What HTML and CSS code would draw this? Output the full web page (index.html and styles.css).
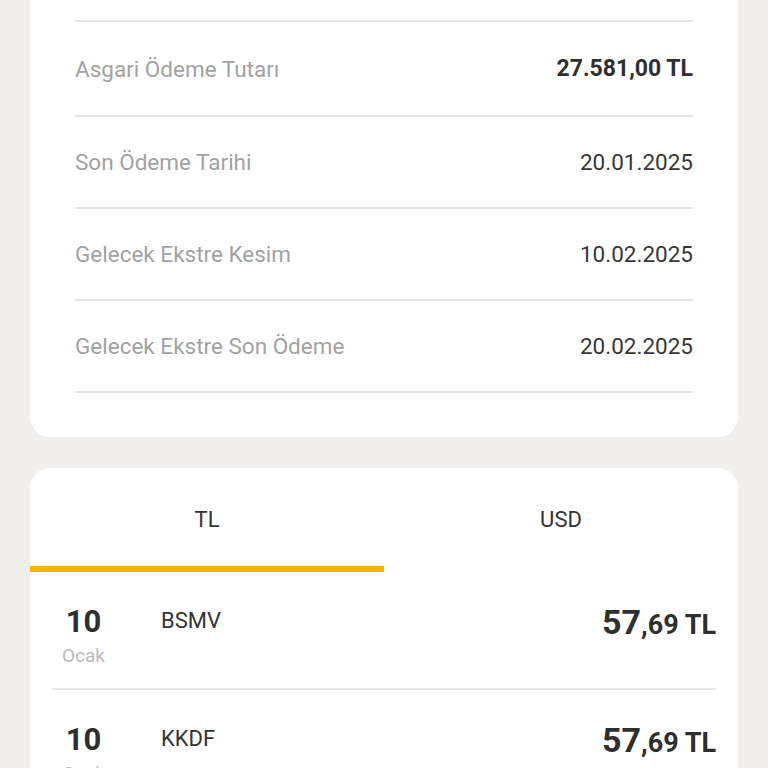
FILE: index.html
```html
<!DOCTYPE html>
<html lang="tr">
<head>
  <meta charset="UTF-8" />
  <meta name="viewport" content="width=device-width, initial-scale=1" />
  <title>Ekstre Detayı</title>
  <link rel="stylesheet" href="styles.css">
</head>
<body>
  <div class="page">
    <div class="card summary">
      <div class="info-row">
        <span class="info-label">Asgari Ödeme Tutarı</span>
        <span class="info-value strong">27.581,00 TL</span>
      </div>
      <div class="info-row">
        <span class="info-label">Son Ödeme Tarihi</span>
        <span class="info-value">20.01.2025</span>
      </div>
      <div class="info-row">
        <span class="info-label">Gelecek Ekstre Kesim</span>
        <span class="info-value">10.02.2025</span>
      </div>
      <div class="info-row last">
        <span class="info-label">Gelecek Ekstre Son Ödeme</span>
        <span class="info-value">20.02.2025</span>
      </div>
    </div>

    <div class="card transactions">
      <div class="tabs">
        <div class="tab active">TL</div>
        <div class="tab">USD</div>
      </div>
      <div class="tx-list">
        <div class="tx-row">
          <div class="tx-date">
            <div class="tx-day">10</div>
            <div class="tx-month">Ocak</div>
          </div>
          <div class="tx-name">BSMV</div>
          <div class="tx-amount"><span class="int">57</span>,69 TL</div>
        </div>
        <div class="tx-row">
          <div class="tx-date">
            <div class="tx-day">10</div>
            <div class="tx-month">Ocak</div>
          </div>
          <div class="tx-name">KKDF</div>
          <div class="tx-amount"><span class="int">57</span>,69 TL</div>
        </div>
      </div>
    </div>
  </div>
</body>
</html>
```

FILE: styles.css
```css
* { box-sizing: border-box; }
body {
  margin: 0;
  background: #f0efed;
  font-family: Roboto, 'Noto Sans', sans-serif;
  color: #333;
  height: 768px;
  overflow: hidden;
}
.page {
  padding: 0 30px;
}
.card {
  background: #fff;
  border-radius: 20px;
}
.summary {
  border-radius: 0 0 20px 20px;
  padding: 20px 45px 44px;
}
.info-row {
  display: flex;
  justify-content: space-between;
  align-items: center;
  height: 92px;
  border-top: 2px solid #e4e4e4;
}
.info-row:first-child {
  height: 95px;
}
.info-row.last {
  height: 94px;
  border-bottom: 2px solid #e4e4e4;
}
.info-label {
  font-size: 22.5px;
  color: #a2a2a2;
}
.info-value {
  font-size: 22.5px;
  color: #383838;
}
.info-value.strong {
  font-size: 23px;
  font-weight: bold;
  color: #2f2f2f;
}
.transactions {
  margin-top: 31px;
  border-radius: 20px 20px 0 0;
}
.tabs {
  display: flex;
}
.tab {
  flex: 1;
  height: 104px;
  padding-top: 39px;
  line-height: 26px;
  text-align: center;
  font-size: 22px;
  color: #333;
  border-bottom: 6px solid transparent;
}
.tab.active {
  border-bottom-color: #f7b500;
}
.tx-list {
  padding: 0 22px;
}
.tx-row {
  display: flex;
  align-items: flex-start;
  height: 118px;
  padding-top: 30px;
  border-bottom: 2px solid #e6e6e6;
}
.tx-date {
  width: 63px;
  text-align: center;
  margin-right: 46px;
}
.tx-day {
  font-size: 31px;
  font-weight: bold;
  color: #2f2f2f;
  line-height: 40px;
}
.tx-month {
  font-size: 19px;
  line-height: 24px;
  color: #bababa;
  margin-top: 2px;
}
.tx-name {
  flex: 1;
  font-size: 22px;
  line-height: 38px;
  color: #333;
}
.tx-amount {
  font-size: 27px;
  line-height: 40px;
  font-weight: bold;
  color: #2f2f2f;
}
.tx-amount .int {
  font-size: 34px;
}
```
